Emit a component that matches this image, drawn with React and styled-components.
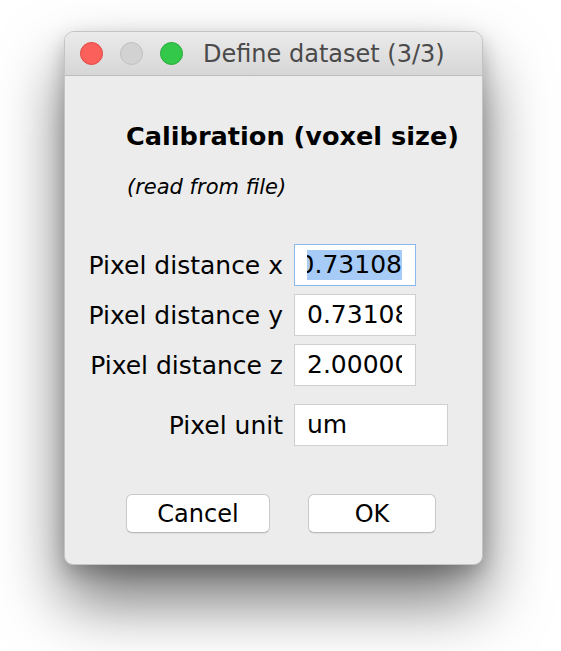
import styled, { createGlobalStyle } from "styled-components";

const GlobalStyle = createGlobalStyle`
  html, body {
    margin: 0;
    padding: 0;
    background: #ffffff;
    overflow: hidden;
  }
  body {
    font-family: "DejaVu Sans", "Liberation Sans", sans-serif;
  }
`;

const Stage = styled.div`
  width: 561px;
  height: 651px;
  padding: 31px 0 0 64px;
  box-sizing: border-box;
`;

const Window = styled.div`
  width: 419px;
  height: 534px;
  box-sizing: border-box;
  background: #ececec;
  border: 1px solid #c4c4c4;
  border-radius: 10px 10px 9px 9px;
  box-shadow: 0 36px 64px rgba(0, 0, 0, 0.55), 0 8px 20px rgba(0, 0, 0, 0.22);
  overflow: hidden;
  display: flex;
  flex-direction: column;
`;

const TitleBar = styled.div`
  height: 43px;
  flex: none;
  display: flex;
  align-items: center;
  padding-left: 15px;
  background: linear-gradient(#ebebeb, #d6d6d6);
  border-bottom: 1px solid #bcbcbc;
`;

const Light = styled.span`
  width: 23px;
  height: 23px;
  box-sizing: border-box;
  border-radius: 50%;
  margin-right: 17px;
  background: ${p => p.$fill};
  border: 1px solid ${p => p.$ring};
`;

const Title = styled.span`
  margin-left: 3px;
  font-size: 24px;
  color: #4a4a4a;
  white-space: nowrap;
`;

const Body = styled.div`
  padding-top: 45px;
  display: flex;
  flex-direction: column;
`;

const Heading = styled.div`
  padding-left: 61px;
  font-size: 25.6px;
  font-weight: bold;
  line-height: 30px;
  color: #000;
  white-space: nowrap;
`;

const Note = styled.div`
  padding-left: 62px;
  margin-top: 23px;
  font-size: 21px;
  font-style: italic;
  line-height: 26px;
  color: #000;
`;

const Form = styled.div`
  margin-top: 44px;
  display: flex;
  flex-direction: column;
  gap: 8px;
`;

const Row = styled.div`
  display: flex;
  align-items: center;
  margin-top: ${p => (p.$spaced ? "10px" : "0")};
`;

const Label = styled.label`
  width: 218px;
  margin-right: 11px;
  text-align: right;
  font-size: 25px;
  color: #000;
  white-space: nowrap;
`;

const Field = styled.div`
  width: ${p => p.$width}px;
  height: 42px;
  box-sizing: border-box;
  padding: 0 13px 0 12px;
  background: #fff;
  border: 1px solid ${p => (p.$focused ? "#8ab8ee" : "#cfcfcf")};
  display: flex;
  align-items: center;
`;

const Clip = styled.div`
  flex: 1;
  overflow: hidden;
  display: flex;
  justify-content: ${p => (p.$scrolled ? "flex-end" : "flex-start")};
`;

const Value = styled.span`
  font-size: 25px;
  line-height: 30px;
  color: #000;
  white-space: nowrap;
  background: ${p => (p.$selected ? "#a6cbf7" : "transparent")};
`;

const Buttons = styled.div`
  margin-top: 48px;
  padding-left: 61px;
  display: flex;
  gap: 38px;
`;

const Button = styled.button`
  width: ${p => p.$width}px;
  height: 39px;
  box-sizing: border-box;
  background: #fff;
  border: 1px solid #c9c9c9;
  border-bottom-color: #b9b9b9;
  border-radius: 6px;
  box-shadow: 0 1px 1px rgba(0, 0, 0, 0.06);
  font-family: "DejaVu Sans", "Liberation Sans", sans-serif;
  font-size: 24px;
  color: #000;
  padding: 0;
`;

const fields = [
  { label: "Pixel distance x", value: "0.73108", width: 122, focused: true },
  { label: "Pixel distance y", value: "0.73108", width: 122 },
  { label: "Pixel distance z", value: "2.00000", width: 122 },
  { label: "Pixel unit", value: "um", width: 154, spaced: true },
];

export default function App() {
  return (
    <>
      <GlobalStyle />
      <Stage>
        <Window>
          <TitleBar>
            <Light $fill="#fc605b" $ring="#e0463f" />
            <Light $fill="#d2d2d2" $ring="#bfbfbf" />
            <Light $fill="#34c84a" $ring="#27a93a" />
            <Title>Define dataset (3/3)</Title>
          </TitleBar>
          <Body>
            <Heading>Calibration (voxel size)</Heading>
            <Note>(read from file)</Note>
            <Form>
              {fields.map(f => (
                <Row key={f.label} $spaced={f.spaced}>
                  <Label>{f.label}</Label>
                  <Field $width={f.width} $focused={f.focused}>
                    <Clip $scrolled={f.focused}>
                      <Value $selected={f.focused}>{f.value}</Value>
                    </Clip>
                  </Field>
                </Row>
              ))}
            </Form>
            <Buttons>
              <Button $width={144}>Cancel</Button>
              <Button $width={128}>OK</Button>
            </Buttons>
          </Body>
        </Window>
      </Stage>
    </>
  );
}
